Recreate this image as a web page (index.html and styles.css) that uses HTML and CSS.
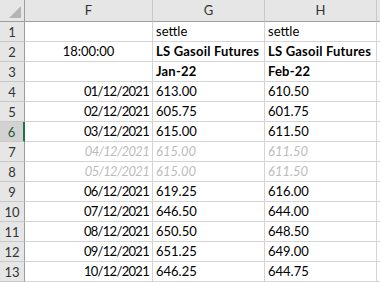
FILE: index.html
```html
<!DOCTYPE html>
<html>
<head>
<meta charset="utf-8">
<link rel="stylesheet" href="styles.css">
</head>
<body>
<div class="sheet">
  <div class="corner"><svg class="tri" width="24" height="21" viewBox="0 0 24 21"><polygon points="9,18 21,18 21,6" fill="#b4b4b4"/></svg></div>
  <div class="colhdr">F</div>
  <div class="colhdr">G</div>
  <div class="colhdr">H</div>
  <div class="colhdr end"></div>

  <div class="rowhdr">1</div>
  <div class="cell"></div>
  <div class="cell">settle</div>
  <div class="cell">settle</div>
  <div class="cell end"></div>

  <div class="rowhdr">2</div>
  <div class="cell c">18:00:00</div>
  <div class="cell b">LS Gasoil Futures</div>
  <div class="cell b">LS Gasoil Futures</div>
  <div class="cell end"></div>

  <div class="rowhdr">3</div>
  <div class="cell"></div>
  <div class="cell b">Jan-22</div>
  <div class="cell b">Feb-22</div>
  <div class="cell end"></div>

  <div class="rowhdr">4</div>
  <div class="cell r">01/12/2021</div>
  <div class="cell">613.00</div>
  <div class="cell">610.50</div>
  <div class="cell end"></div>

  <div class="rowhdr">5</div>
  <div class="cell r">02/12/2021</div>
  <div class="cell">605.75</div>
  <div class="cell">601.75</div>
  <div class="cell end"></div>

  <div class="rowhdr sel">6</div>
  <div class="cell r">03/12/2021</div>
  <div class="cell">615.00</div>
  <div class="cell">611.50</div>
  <div class="cell end"></div>

  <div class="rowhdr">7</div>
  <div class="cell r muted">04/12/2021</div>
  <div class="cell muted">615.00</div>
  <div class="cell muted">611.50</div>
  <div class="cell end"></div>

  <div class="rowhdr">8</div>
  <div class="cell r muted">05/12/2021</div>
  <div class="cell muted">615.00</div>
  <div class="cell muted">611.50</div>
  <div class="cell end"></div>

  <div class="rowhdr">9</div>
  <div class="cell r">06/12/2021</div>
  <div class="cell">619.25</div>
  <div class="cell">616.00</div>
  <div class="cell end"></div>

  <div class="rowhdr">10</div>
  <div class="cell r">07/12/2021</div>
  <div class="cell">646.50</div>
  <div class="cell">644.00</div>
  <div class="cell end"></div>

  <div class="rowhdr">11</div>
  <div class="cell r">08/12/2021</div>
  <div class="cell">650.50</div>
  <div class="cell">648.50</div>
  <div class="cell end"></div>

  <div class="rowhdr">12</div>
  <div class="cell r">09/12/2021</div>
  <div class="cell">651.25</div>
  <div class="cell">649.00</div>
  <div class="cell end"></div>

  <div class="rowhdr">13</div>
  <div class="cell r">10/12/2021</div>
  <div class="cell">646.25</div>
  <div class="cell">644.75</div>
  <div class="cell end"></div>
</div>
</body>
</html>
```
FILE: styles.css
```css
html, body {
  margin: 0;
  padding: 0;
  background: #ffffff;
  overflow: hidden;
}
.sheet {
  display: grid;
  grid-template-columns: 25px 128px 112px 112px 3px;
  grid-template-rows: 22px repeat(13, 20px);
  width: 380px;
  font-family: Lato, "Open Sans", sans-serif;
  font-size: 13px;
  color: #000;
}
.sheet > div {
  box-sizing: border-box;
  border-right: 1px solid #d4d4d4;
  border-bottom: 1px solid #d4d4d4;
  overflow: hidden;
  white-space: nowrap;
}
.corner {
  background: #e6e6e6;
  border-right-color: #9e9e9e !important;
  border-bottom-color: #9e9e9e !important;
}
.tri { display: block; }
.colhdr {
  background: #e6e6e6;
  border-right-color: #c8c8c8 !important;
  border-bottom-color: #9e9e9e !important;
  display: flex;
  align-items: center;
  justify-content: center;
  color: #333;
  padding-bottom: 1px;
}
.colhdr.end { border-right: none !important; }
.rowhdr {
  background: #e6e6e6;
  border-right-color: #9e9e9e !important;
  border-bottom-color: #c8c8c8 !important;
  display: flex;
  align-items: center;
  justify-content: center;
  color: #333;
}
.rowhdr.sel {
  background: #d2d2d2;
  border-right: 2px solid #217346 !important;
  color: #1d5b3a;
}
.cell {
  display: flex;
  align-items: flex-end;
  padding: 0 3px 2px 3px;
  line-height: 16px;
}
.cell.end { border-right: none !important; padding: 0; }
.cell.r { justify-content: flex-end; padding-right: 3px; letter-spacing: -0.7px; }
.cell.c { justify-content: center; }
.cell.b { font-weight: bold; letter-spacing: 0.2px; }
.cell.muted { color: #bcbcbc; font-style: italic; }
```
